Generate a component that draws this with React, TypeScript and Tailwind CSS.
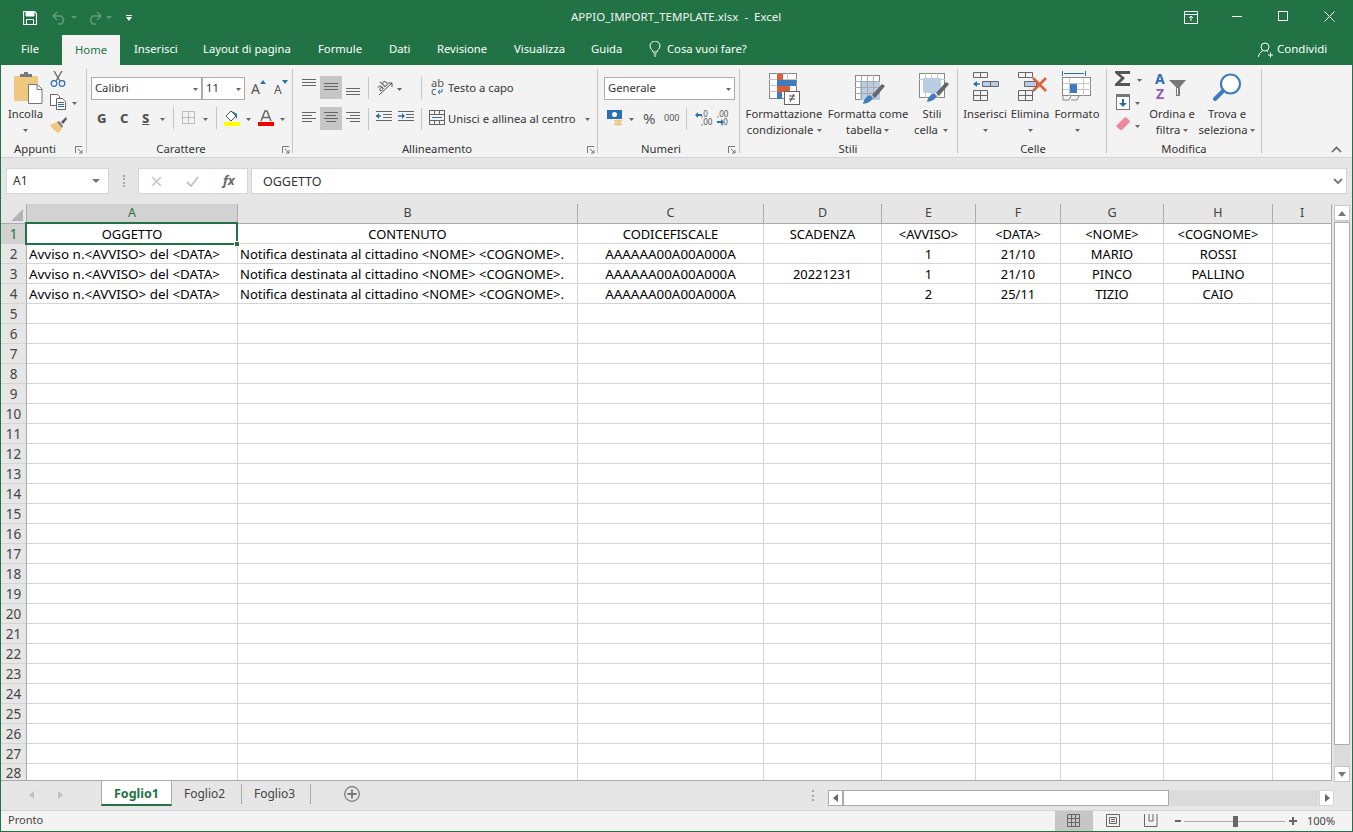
import React from 'react';

const ui = "font-['Open_Sans','Noto_Sans',sans-serif]";
const cellFont = "font-['Lato','Liberation_Sans',sans-serif]";

const columns = ['A', 'B', 'C', 'D', 'E', 'F', 'G', 'H', 'I'];
const gridCols = 'grid grid-cols-[26px_211px_340px_186px_118px_94px_85px_103px_109px_59px]';

const avviso = 'Avviso n.<AVVISO> del <DATA>';
const notifica = 'Notifica destinata al cittadino <NOME> <COGNOME>.';
const cf = 'AAAAAA00A00A000A';

const data: string[][] = [
  ['OGGETTO', 'CONTENUTO', 'CODICEFISCALE', 'SCADENZA', '<AVVISO>', '<DATA>', '<NOME>', '<COGNOME>', ''],
  [avviso, notifica, cf, '', '1', '21/10', 'MARIO', 'ROSSI', ''],
  [avviso, notifica, cf, '20221231', '1', '21/10', 'PINCO', 'PALLINO', ''],
  [avviso, notifica, cf, '', '2', '25/11', 'TIZIO', 'CAIO', ''],
];

const rows = Array.from({ length: 28 }, (_, i) => i + 1);

const Caret = ({ className }: { className: string }) => (
  <svg className={'absolute ml-px mt-px ' + className} width="5" height="3" viewBox="0 0 5 3">
    <path d="M0 0h5L2.500 3z" fill="#666" />
  </svg>
);

const Lbl = ({ className, children }: { className: string; children: React.ReactNode }) => (
  <span className={'absolute whitespace-nowrap text-[11.25px] leading-[16px] text-[#333] ' + className}>{children}</span>
);

const Launcher = ({ className }: { className: string }) => (
  <svg className={'absolute ' + className} width="8" height="8" viewBox="0 0 8 8" fill="none" stroke="#777">
    <path d="M.5 7V.5H7" />
    <path d="M3 3l4 4M7 4v3H4" />
  </svg>
);

const Sep = ({ className }: { className: string }) => <div className={'absolute w-px bg-[#c6c6c6] ' + className} />;

const GroupEnd = () => <div className="absolute right-0 top-[4px] h-[84px] w-px bg-[#c6c6c6]" />;

const AlignLines = ({ className, d }: { className: string; d: string }) => (
  <svg className={'absolute ' + className} width="15" height="12" viewBox="0 0 15 12" fill="none" stroke="#666">
    <path d={d} />
  </svg>
);

const Appunti = () => (
  <div className="relative h-full w-[87px]">
    <svg className="absolute left-[14px] top-[7px]" width="29" height="32" viewBox="0 0 29 32">
      <rect x="0" y="4" width="24" height="25" rx="1.500" fill="#eec87e" />
      <path d="M6 4V2h4V0h4v2h4v3H6z" fill="#7a7a7a" />
      <path d="M14.500 12.500h9l4.500 4.500v14.500h-13.500z" fill="#fff" stroke="#777" />
      <path d="M23 13v4.500h5" fill="none" stroke="#777" />
    </svg>
    <Lbl className="left-0 top-[41px] w-[51px] text-center">Incolla</Lbl>
    <Caret className="left-[22px] top-[63px]" />
    <svg className="absolute left-[50px] top-[6px]" width="16" height="16" viewBox="0 0 16 16" fill="none">
      <path d="M4 0l6 10M12 0L6 10" stroke="#6a6a6a" strokeWidth="1.400" />
      <circle cx="4" cy="12.500" r="2.800" stroke="#2b6fb3" strokeWidth="1.200" />
      <circle cx="12" cy="12.500" r="2.800" stroke="#2b6fb3" strokeWidth="1.200" />
    </svg>
    <svg className="absolute left-[50px] top-[29px]" width="16" height="16" viewBox="0 0 16 16" fill="#fff" stroke="#666">
      <path d="M.5.500h7l2 2v9h-9z" />
      <path d="M6.500 4.500h6l3 3v8h-9z" />
      <path d="M8 8.500h6M8 10.500h6M8 12.500h6" stroke="#2b6fb3" />
    </svg>
    <Caret className="left-[71px] top-[36px]" />
    <svg className="absolute left-[50px] top-[52px]" width="17" height="16" viewBox="0 0 17 16">
      <path d="M0 8l7-3 5 6-3 5c-3-1-7-4-9-8z" fill="#eec87e" />
      <path d="M7 5l2-1 4 5-1 2z" fill="#7a7a7a" />
      <path d="M11 5l5-5 1 2-4 5z" fill="#555" />
    </svg>
    <Lbl className="left-0 top-[76px] w-[70px] text-center">Appunti</Lbl>
    <Launcher className="left-[75px] top-[81px]" />
    <GroupEnd />
  </div>
);

const Carattere = () => (
  <div className="relative h-full w-[206px]">
    <div className="absolute left-[4px] top-[12px] h-[23px] w-[111px] border border-[#ababab] bg-white">
      <span className={'absolute left-[3px] top-[2px] text-[11.25px] leading-[16px] text-[#333] ' + ui}>Calibri</span>
      <Caret className="right-[3px] top-[9px]" />
    </div>
    <div className="absolute left-[115px] top-[12px] h-[23px] w-[43px] border border-[#ababab] bg-white">
      <span className={'absolute left-[3px] top-[2px] text-[11.25px] leading-[16px] text-[#333] ' + ui}>11</span>
      <Caret className="right-[3px] top-[9px]" />
    </div>
    <span className="absolute left-[164px] top-[15px] text-[14px] leading-[18px] text-[#555]">A</span>
    <svg className="absolute left-[173px] top-[15px]" width="6" height="4" viewBox="0 0 6 4">
      <path d="M0 4h6L3 0z" fill="#2b6fb3" />
    </svg>
    <span className="absolute left-[187px] top-[17px] text-[12px] leading-[16px] text-[#555]">A</span>
    <svg className="absolute left-[195px] top-[15px]" width="6" height="4" viewBox="0 0 6 4">
      <path d="M0 0h6L3 4z" fill="#2b6fb3" />
    </svg>
    <span className="absolute left-[10px] top-[45px] text-[13px] font-extrabold leading-[16px] text-[#555]">G</span>
    <span className="absolute left-[33px] top-[45px] text-[13px] font-extrabold leading-[16px] text-[#555]">C</span>
    <span className="absolute left-[55px] top-[45px] text-[13px] font-extrabold leading-[16px] text-[#555] underline">S</span>
    <Caret className="left-[72px] top-[52px]" />
    <Sep className="left-[86px] top-[42px] h-[22px]" />
    <svg className="absolute left-[95px] top-[46px]" width="13" height="13" viewBox="0 0 13 13" fill="none" stroke="#888" strokeDasharray="1 1">
      <path d="M.5.500h12v12H.5zM6.500.500v12M.5 6.500h12" />
    </svg>
    <Caret className="left-[115px] top-[52px]" />
    <Sep className="left-[129px] top-[42px] h-[22px]" />
    <svg className="absolute left-[137px] top-[45px]" width="17" height="17" viewBox="0 0 17 17">
      <path d="M2 6l5-5 5 5-5 5z" fill="#fff" stroke="#555" />
      <path d="M8 1l5 3v5l-2-3z" fill="#2b6fb3" />
      <rect x="0" y="12" width="16" height="4" fill="#ffff00" />
    </svg>
    <Caret className="left-[158px] top-[52px]" />
    <svg className="absolute left-[171px] top-[45px]" width="16" height="17" viewBox="0 0 16 17">
      <path d="M3 11L7 1h2l4 10M5 7.500h6" fill="none" stroke="#666" strokeWidth="1.500" />
      <rect x="0" y="12" width="16" height="4" fill="#f00000" />
    </svg>
    <Caret className="left-[192px] top-[52px]" />
    <Lbl className="left-[44px] top-[76px] w-[100px] text-center">Carattere</Lbl>
    <Launcher className="left-[195px] top-[81px]" />
    <GroupEnd />
  </div>
);

const Allineamento = () => (
  <div className="relative h-full w-[305px]">
    <div className="absolute left-[27px] top-[11px] h-[23px] w-[22px] bg-[#c6c6c6]" />
    <div className="absolute left-[27px] top-[42px] h-[23px] w-[22px] bg-[#c6c6c6]" />
    <AlignLines className="left-[9px] top-[13px]" d="M0 1.500h14M0 4.500h14M0 7.500h14" />
    <AlignLines className="left-[31px] top-[17px]" d="M0 1.500h14M0 4.500h14M0 7.500h14" />
    <AlignLines className="left-[53px] top-[21px]" d="M0 2.500h14M0 5.500h14M0 8.500h14" />
    <AlignLines className="left-[9px] top-[47px]" d="M0 .5h14M0 3.500h10M0 6.500h14M0 9.500h10" />
    <AlignLines className="left-[31px] top-[47px]" d="M0 .5h14M2 3.500h10M0 6.500h14M2 9.500h10" />
    <AlignLines className="left-[53px] top-[47px]" d="M0 .5h14M4 3.500h10M0 6.500h14M4 9.500h10" />
    <Sep className="left-[75px] top-[12px] h-[22px]" />
    <Sep className="left-[75px] top-[43px] h-[22px]" />
    <span className="absolute left-[83px] top-[15px] -rotate-45 text-[10px] leading-[10px] text-[#555]">ab</span>
    <svg className="absolute left-[85px] top-[17px]" width="15" height="14" viewBox="0 0 15 14" fill="none" stroke="#555">
      <path d="M1 13L14 1M14 1h-4M14 1v4" />
    </svg>
    <Caret className="left-[103px] top-[22px]" />
    <svg className="absolute left-[83px] top-[46px]" width="16" height="12" viewBox="0 0 16 12" fill="none" stroke="#666">
      <path d="M0 .5h16M7 3.500h9M7 6.500h9M0 9.500h16" />
      <path d="M0 5h5" stroke="#2b6fb3" strokeWidth="1.500" />
      <path d="M3 2L0 5l3 3z" fill="#2b6fb3" stroke="none" />
    </svg>
    <svg className="absolute left-[105px] top-[46px]" width="16" height="12" viewBox="0 0 16 12" fill="none" stroke="#666">
      <path d="M0 .5h16M8 3.500h8M8 6.500h8M0 9.500h16" />
      <path d="M0 5h5" stroke="#2b6fb3" strokeWidth="1.500" />
      <path d="M4 2l3 3-3 3z" fill="#2b6fb3" stroke="none" />
    </svg>
    <Sep className="left-[128px] top-[12px] h-[22px]" />
    <Sep className="left-[128px] top-[43px] h-[22px]" />
    <span className={'absolute left-[138px] top-[14px] w-[13px] text-[11px] leading-[8px] text-[#555] ' + ui}>ab<br />c</span>
    <svg className="absolute left-[144px] top-[24px]" width="6" height="6" viewBox="0 0 6 6" fill="none" stroke="#2b6fb3">
      <path d="M5 0v3H1M3 1L1 3l2 2" />
    </svg>
    <Lbl className={'left-[155px] top-[15px] ' + ui}>Testo a capo</Lbl>
    <svg className="absolute left-[136px] top-[45px]" width="16" height="15" viewBox="0 0 16 15" fill="none" stroke="#666">
      <rect x=".5" y=".5" width="15" height="14" />
      <path d="M.5 4.500h15M.5 10.500h15M5.500.5v4M10.500.5v4M5.500 10.500v4M10.500 10.500v4" />
      <path d="M3 7.500h10" stroke="#2b6fb3" />
    </svg>
    <Lbl className={'left-[155px] top-[46px] ' + ui}>Unisci e allinea al centro</Lbl>
    <Caret className="left-[291px] top-[52px]" />
    <Lbl className="left-[94px] top-[76px] w-[100px] text-center">Allineamento</Lbl>
    <Launcher className="left-[294px] top-[81px]" />
    <GroupEnd />
  </div>
);

const Numeri = () => (
  <div className="relative h-full w-[142px]">
    <div className="absolute left-[6px] top-[12px] h-[23px] w-[131px] border border-[#ababab] bg-white">
      <span className={'absolute left-[3px] top-[2px] text-[11.25px] leading-[16px] text-[#333] ' + ui}>Generale</span>
      <Caret className="right-[3px] top-[9px]" />
    </div>
    <svg className="absolute left-[9px] top-[45px]" width="16" height="17" viewBox="0 0 16 17">
      <rect x="0" y="0" width="15" height="9" fill="#2b6fb3" />
      <circle cx="7.500" cy="4.500" r="2.500" fill="#fff" />
      <ellipse cx="11" cy="11" rx="4" ry="1.500" fill="#eec87e" />
      <ellipse cx="11" cy="14" rx="4" ry="1.500" fill="#eec87e" />
    </svg>
    <Caret className="left-[30px] top-[52px]" />
    <span className={'absolute left-[45px] top-[43px] text-[15px] leading-[20px] text-[#555] ' + ui}>%</span>
    <span className={'absolute left-[66px] top-[46px] text-[9px] leading-[14px] text-[#555] ' + ui}>000</span>
    <Sep className="left-[88px] top-[43px] h-[22px]" />
    <span className={'absolute left-[103px] top-[45px] text-[8px] leading-[8px] text-[#555] ' + ui}>,0<br />,00</span>
    <svg className="absolute left-[97px] top-[47px]" width="7" height="6" viewBox="0 0 7 6">
      <path d="M0 3l3-3v2h4v2H3v2z" fill="#2b6fb3" />
    </svg>
    <span className={'absolute left-[119px] top-[45px] text-[8px] leading-[8px] text-[#555] ' + ui}>,00<br />&nbsp;&nbsp;,0</span>
    <svg className="absolute left-[119px] top-[54px]" width="7" height="6" viewBox="0 0 7 6">
      <path d="M7 3L4 0v2H0v2h4v2z" fill="#2b6fb3" />
    </svg>
    <Lbl className="left-[33px] top-[76px] w-[60px] text-center">Numeri</Lbl>
    <Launcher className="left-[130px] top-[81px]" />
    <GroupEnd />
  </div>
);

const Stili = () => (
  <div className="relative h-full w-[218px]">
    <svg className="absolute left-[29px] top-[8px]" width="32" height="32" viewBox="0 0 32 32">
      <rect x=".5" y=".5" width="27" height="25" fill="#fff" stroke="#888" />
      <path d="M8.500 0v26M18.500 0v26M0 6.500h28M0 12.500h28M0 18.500h28" stroke="#c6c6c6" />
      <rect x="8" y="1" width="6" height="6" fill="#d9603b" />
      <rect x="8" y="7" width="19" height="6" fill="#3f7cbf" />
      <rect x="8" y="13" width="13" height="6" fill="#d9603b" />
      <rect x="8" y="19" width="5" height="7" fill="#3f7cbf" />
      <rect x="15.500" y="18.500" width="15" height="13" fill="#fff" stroke="#666" />
      <path d="M20 23h6M20 26h6M25 21l-4 8" stroke="#444" fill="none" />
    </svg>
    <Lbl className={'left-[0px] top-[41px] w-[88px] text-center ' + ui}>Formattazione</Lbl>
    <Lbl className={'left-[2px] top-[57px] w-[76px] text-center ' + ui}>condizionale</Lbl>
    <Caret className="left-[76px] top-[63px]" />
    <svg className="absolute left-[115px] top-[10px]" width="30" height="30" viewBox="0 0 30 30">
      <rect x=".5" y=".5" width="24" height="24" fill="#fff" stroke="#888" />
      <rect x="5" y="7" width="20" height="18" fill="#b9cde5" />
      <path d="M6.500 0v25M12.500 0v25M18.500 0v25M0 6.500h25M0 12.500h25M0 18.500h25" stroke="#aaa" />
      <path d="M8 29c1-5 3-7 7-9l3 3c-2 3-4 5-10 6z" fill="#3f7cbf" />
      <path d="M17 20L27 9l3 2-10 12z" fill="#666" />
    </svg>
    <Lbl className={'left-[85px] top-[41px] w-[86px] text-center ' + ui}>Formatta come</Lbl>
    <Lbl className={'left-[104px] top-[57px] w-[40px] text-center ' + ui}>tabella</Lbl>
    <Caret className="left-[143px] top-[63px]" />
    <svg className="absolute left-[179px] top-[8px]" width="30" height="30" viewBox="0 0 30 30">
      <rect x=".5" y=".5" width="25" height="24" fill="#fff" stroke="#888" />
      <path d="M6.500 0v25M12.500 0v25M18.500 0v25M0 6.500h26" stroke="#c6c6c6" />
      <rect x="4" y="5" width="18" height="15" fill="#b9cde5" />
      <path d="M8 29c1-5 3-7 7-9l3 3c-2 3-4 5-10 6z" fill="#3f7cbf" />
      <path d="M17 20L27 9l3 2-10 12z" fill="#666" />
    </svg>
    <Lbl className={'left-[172px] top-[41px] w-[40px] text-center ' + ui}>Stili</Lbl>
    <Lbl className={'left-[166px] top-[57px] w-[40px] text-center ' + ui}>cella</Lbl>
    <Caret className="left-[202px] top-[63px]" />
    <Lbl className="left-[78px] top-[76px] w-[60px] text-center">Stili</Lbl>
    <GroupEnd />
  </div>
);

const Celle = () => (
  <div className="relative h-full w-[149px]">
    <svg className="absolute left-[14px] top-[7px]" width="28" height="29" viewBox="0 0 28 29" fill="none" stroke="#666">
      <path d="M1.500.5h14v5h-14zM8.500.5v5" />
      <path d="M10.500 9.500h16v5h-16zM18.500 9.500v5" fill="#b9cde5" />
      <path d="M8 12H2" stroke="#2b6fb3" strokeWidth="1.500" />
      <path d="M5 9l-4 3 4 3z" fill="#2b6fb3" stroke="none" />
      <path d="M1.500 18.500h14v10h-14zM1.500 23.500h14M8.500 18.500v10" />
    </svg>
    <Lbl className={'left-[0px] top-[41px] w-[54px] text-center ' + ui}>Inserisci</Lbl>
    <Caret className="left-[24px] top-[63px]" />
    <svg className="absolute left-[59px] top-[7px]" width="31" height="29" viewBox="0 0 31 29" fill="none" stroke="#666">
      <path d="M1.500.5h14v5h-14zM8.500.5v5" />
      <path d="M7.500 9.500h12v5h-12z" fill="#b9cde5" />
      <path d="M1.500 18.500h14v10h-14zM1.500 23.500h14M8.500 18.500v10" />
      <path d="M16 6l13 13M29 6L16 19" stroke="#e0603b" strokeWidth="2.500" />
    </svg>
    <Lbl className={'left-[44px] top-[41px] w-[56px] text-center ' + ui}>Elimina</Lbl>
    <Caret className="left-[69px] top-[63px]" />
    <svg className="absolute left-[104px] top-[6px]" width="30" height="31" viewBox="0 0 30 31" fill="none">
      <path d="M.5 0v5M23.500 0v5M2 2.500h20" stroke="#2b6fb3" />
      <rect x=".5" y="6.500" width="28" height="18" fill="#fff" stroke="#888" />
      <path d="M7.500 7v18M21.500 7v18M1 12.500h28M1 18.500h28" stroke="#c6c6c6" />
      <rect x="8" y="13" width="7" height="9" fill="#3f7cbf" />
      <path d="M1 25v4h6l2-4M9 29l6 0 2-4" stroke="#888" />
    </svg>
    <Lbl className={'left-[89px] top-[41px] w-[60px] text-center ' + ui}>Formato</Lbl>
    <Caret className="left-[116px] top-[63px]" />
    <Lbl className="left-[45px] top-[76px] w-[60px] text-center">Celle</Lbl>
    <GroupEnd />
  </div>
);

const Modifica = () => (
  <div className="relative h-full w-[155px]">
    <svg className="absolute left-[8px] top-[6px]" width="16" height="15" viewBox="0 0 16 15">
      <path d="M0 0h15v3H5l5 4-5 5h10v3H0v-2l6-6-6-5z" fill="#555" />
    </svg>
    <Caret className="left-[29px] top-[13px]" />
    <svg className="absolute left-[9px] top-[29px]" width="14" height="16" viewBox="0 0 14 16">
      <rect x=".5" y=".5" width="13" height="15" fill="#fff" stroke="#777" />
      <rect x="0" y="0" width="14" height="3" fill="#777" />
      <path d="M7 5v5" stroke="#2b6fb3" strokeWidth="2" />
      <path d="M3 9h8l-4 4z" fill="#2b6fb3" />
    </svg>
    <Caret className="left-[27px] top-[36px]" />
    <svg className="absolute left-[9px] top-[52px]" width="14" height="14" viewBox="0 0 14 14">
      <path d="M0 9l8-8c1-1 2-1 3 0l2 2c1 1 1 2 0 3l-7 7H4z" fill="#ec8a9c" />
    </svg>
    <Caret className="left-[27px] top-[59px]" />
    <span className="absolute left-[48px] top-[6px] text-[14px] font-bold leading-[16px] text-[#2b6fb3]">A</span>
    <span className="absolute left-[49px] top-[21px] text-[14px] font-bold leading-[16px] text-[#8f5fb0]">Z</span>
    <svg className="absolute left-[62px] top-[15px]" width="17" height="16" viewBox="0 0 17 16">
      <path d="M0 0h17l-6 7v9H7V7z" fill="#777" />
      <path d="M8.500 8v7" stroke="#fff" />
    </svg>
    <Lbl className={'left-[35px] top-[41px] w-[60px] text-center ' + ui}>Ordina e</Lbl>
    <Lbl className={'left-[41px] top-[57px] w-[40px] text-center ' + ui}>filtra</Lbl>
    <Caret className="left-[75px] top-[63px]" />
    <svg className="absolute left-[106px] top-[8px]" width="29" height="28" viewBox="0 0 29 28" fill="none">
      <circle cx="17.500" cy="11" r="9.500" stroke="#3f7cbf" strokeWidth="2.200" fill="#fff" />
      <path d="M10 18L2 26" stroke="#3f7cbf" strokeWidth="4" strokeLinecap="round" />
    </svg>
    <Lbl className={'left-[90px] top-[41px] w-[60px] text-center ' + ui}>Trova e</Lbl>
    <Lbl className={'left-[86px] top-[57px] w-[60px] text-center ' + ui}>seleziona</Lbl>
    <Caret className="left-[142px] top-[63px]" />
    <Lbl className="left-[47px] top-[76px] w-[60px] text-center">Modifica</Lbl>
    <GroupEnd />
  </div>
);

const Cell = ({ col, row, text }: { col: number; row: number; text: string }) => {
  const left = col < 2 && row > 0;
  let size = 'text-[12.9px]';
  if (row > 0 && (col === 0 || col === 2)) size = 'text-[13.4px]';
  if (row > 0 && col === 1) size = 'text-[13px]';
  return (
    <div
      className={
        'overflow-hidden whitespace-nowrap border-b border-r border-[#d4d4d4] pt-[2px] leading-[17px] text-[#000] ' +
        size + ' ' +
        (left ? 'pl-[2px]' : 'text-center')
      }
    >
      {text}
    </div>
  );
};

export default function App() {
  return (
    <div className={'relative flex h-[832px] w-[1353px] flex-col overflow-hidden border-x border-b border-[#217346] bg-[#e6e6e6] ' + ui}>
      {/* title bar */}
      <div className="relative ml-[-1px] mr-[-1px] h-[65px] shrink-0 bg-[#217346] text-white">
        <svg className="absolute left-[23px] top-[11px]" width="14" height="14" viewBox="0 0 14 14" fill="none" stroke="#fff">
          <path d="M.5.500h11l2 2v11H.5z" strokeWidth="1.200" />
          <path d="M3 1v4h8V1" fill="#fff" />
          <path d="M3.500 13V8.500h7V13" />
        </svg>
        <svg className="absolute left-[52px] top-[11px]" width="15" height="14" viewBox="0 0 15 14" fill="none" stroke="#5f9c7d" strokeWidth="1.500">
          <path d="M5 1L1 5l4 4M1 5h8a4.500 4.500 0 0 1 0 8H6" />
        </svg>
        <svg className="absolute left-[71px] top-[16px]" width="6" height="3" viewBox="0 0 6 3">
          <path d="M0 0h6L3 3z" fill="#5f9c7d" />
        </svg>
        <svg className="absolute left-[87px] top-[11px]" width="15" height="14" viewBox="0 0 15 14" fill="none" stroke="#5f9c7d" strokeWidth="1.500">
          <path d="M10 1l4 4-4 4M14 5H6a4.500 4.500 0 0 0 0 8h3" />
        </svg>
        <svg className="absolute left-[106px] top-[16px]" width="6" height="3" viewBox="0 0 6 3">
          <path d="M0 0h6L3 3z" fill="#5f9c7d" />
        </svg>
        <svg className="absolute left-[126px] top-[15px]" width="6" height="6" viewBox="0 0 6 6" fill="#fff">
          <path d="M0 0h6v1H0zM0 2h6L3 6z" />
        </svg>
        <span className="absolute left-[571px] top-[9px] whitespace-pre text-[11.5px] leading-[16px] text-[#f2f2f2]">APPIO_IMPORT_TEMPLATE.xlsx  -  Excel</span>
        <svg className="absolute left-[1184px] top-[11px]" width="14" height="13" viewBox="0 0 14 13" fill="none" stroke="#fff">
          <path d="M.5.500h13v12H.5zM.5 3.500h13M7 10V5.500M5 7l2-2 2 2" />
        </svg>
        <div className="absolute left-[1232px] top-[16px] h-px w-[10px] bg-white" />
        <div className="absolute left-[1278px] top-[11px] h-[10px] w-[10px] border border-white" />
        <svg className="absolute left-[1324px] top-[11px]" width="11" height="11" viewBox="0 0 11 11" stroke="#fff">
          <path d="M.5.500l10 10M10.500.5l-10 10" />
        </svg>

        <span className="absolute left-[21px] top-[41px] text-[11.25px] leading-[16px]">File</span>
        <div className="absolute left-[62px] top-[35px] flex h-[30px] w-[58px] items-center justify-center bg-[#f3f3f3] text-[11.25px] text-[#217346]">Home</div>
        <span className="absolute left-[134px] top-[41px] text-[11.25px] leading-[16px]">Inserisci</span>
        <span className="absolute left-[203px] top-[41px] text-[11.25px] leading-[16px]">Layout di pagina</span>
        <span className="absolute left-[318px] top-[41px] text-[11.25px] leading-[16px]">Formule</span>
        <span className="absolute left-[389px] top-[41px] text-[11.25px] leading-[16px]">Dati</span>
        <span className="absolute left-[437px] top-[41px] text-[11.25px] leading-[16px]">Revisione</span>
        <span className="absolute left-[514px] top-[41px] text-[11.25px] leading-[16px]">Visualizza</span>
        <span className="absolute left-[591px] top-[41px] text-[11.25px] leading-[16px]">Guida</span>
        <svg className="absolute left-[649px] top-[41px]" width="12" height="16" viewBox="0 0 12 16" fill="none" stroke="#fff">
          <path d="M4 11c0-2-3-3-3-6a5 5 0 0 1 10 0c0 3-3 4-3 6zM4.500 13h3M5 15h2" />
        </svg>
        <span className="absolute left-[667px] top-[41px] text-[11.25px] leading-[16px]">Cosa vuoi fare?</span>
        <svg className="absolute left-[1258px] top-[42px]" width="15" height="16" viewBox="0 0 15 16" fill="none" stroke="#fff">
          <circle cx="7" cy="5" r="4" />
          <path d="M.5 15c0-3 2-5 4-6M9 9l1 1M10 13h5M12.500 10.500v5" />
        </svg>
        <span className="absolute left-[1277px] top-[41px] text-[11.5px] leading-[16px]">Condividi</span>
      </div>

      {/* ribbon */}
      <div className="relative ml-[-1px] flex h-[93px] shrink-0 border-b border-[#d4d4d4] bg-[#f3f3f3]">
        <Appunti />
        <Carattere />
        <Allineamento />
        <Numeri />
        <Stili />
        <Celle />
        <Modifica />
        <svg className="absolute left-[1331px] top-[81px]" width="11" height="7" viewBox="0 0 11 7" fill="none" stroke="#666" strokeWidth="1.600">
          <path d="M1 6l4.500-4.500L10 6" />
        </svg>
        <div className="absolute left-0 top-0 h-full w-px bg-[#217346]" />
      </div>

      {/* formula bar */}
      <div className="relative h-[46px] shrink-0">
        <div className="absolute left-[5px] top-[10px] h-[26px] w-[103px] border border-[#d4d4d4] bg-white">
          <span className={'absolute left-[6px] top-[4px] text-[12px] leading-[16px] text-[#333] ' + ui}>A1</span>
          <svg className="absolute right-[8px] top-[10px]" width="8" height="4" viewBox="0 0 8 4">
            <path d="M0 0h8L4 4z" fill="#777" />
          </svg>
        </div>
        <div className="absolute left-[122px] top-[17px] h-[12px] w-[2px] border-l-2 border-dotted border-[#aaa]" />
        <div className="absolute left-[137px] top-[10px] h-[26px] w-[110px] border border-[#d4d4d4] bg-white">
          <svg className="absolute left-[12px] top-[7px]" width="11" height="11" viewBox="0 0 11 11" stroke="#c6c6c6" strokeWidth="1.500">
            <path d="M1 1l9 9M10 1l-9 9" />
          </svg>
          <svg className="absolute left-[47px] top-[7px]" width="13" height="11" viewBox="0 0 13 11" fill="none" stroke="#c6c6c6" strokeWidth="2">
            <path d="M1 6l4 4 7-9" />
          </svg>
          <span className="absolute left-[84px] top-[3px] font-['Liberation_Serif',serif] text-[13px] font-bold italic leading-[16px] text-[#666]">fx</span>
        </div>
        <div className="absolute left-[250px] top-[10px] h-[26px] w-[1096px] border border-[#d4d4d4] bg-white">
          <span className={'absolute left-[11px] top-[5px] text-[12.5px] leading-[16px] text-[#333] ' + ui}>OGGETTO</span>
          <svg className="absolute right-[3px] top-[9px]" width="10" height="7" viewBox="0 0 10 7" fill="none" stroke="#777" strokeWidth="1.800">
            <path d="M1 1l4 4 4-4" />
          </svg>
        </div>
      </div>

      {/* sheet */}
      <div className="relative min-h-0 flex-1">
        <div className={gridCols + ' absolute left-0 top-0 h-[20px] w-[1331px] border-b border-[#ababab] text-[13px]'}>
          <div className="relative border-r border-[#ababab] bg-[#e6e6e6]">
            <svg className="absolute bottom-[2px] right-[3px]" width="12" height="12" viewBox="0 0 12 12">
              <path d="M12 0v12H0z" fill="#b4b4b4" />
            </svg>
          </div>
          {columns.map((c, i) => (
            <div
              key={c}
              className={
                'flex items-center justify-center border-r border-[#ababab] text-[12.5px] ' +
                cellFont + ' ' +
                (i === 0 ? 'bg-[#d2d2d2] text-[#217346]' : 'bg-[#e6e6e6] text-[#444]')
              }
            >
              {c}
            </div>
          ))}
        </div>
        <div className={gridCols + ' absolute left-0 top-[20px] h-[557px] w-[1331px] auto-rows-[20px] overflow-hidden border-b border-r border-[#ababab] bg-white ' + cellFont}>
          {rows.map((r) => (
            <React.Fragment key={r}>
              <div
                className={
                  'flex items-center justify-center border-b border-r border-[#ababab] border-b-[#d4d4d4] pt-[1px] text-[13.5px] leading-[16px] ' +
                  (r === 28 ? 'h-[17px] ' : '') +
                  (r === 1 ? 'bg-[#d2d2d2] text-[#217346]' : 'bg-[#e6e6e6] text-[#444]')
                }
              >
                {r}
              </div>
              {columns.map((c, i) => (
                <Cell key={c} col={i} row={r - 1} text={data[r - 1]?.[i] ?? ''} />
              ))}
            </React.Fragment>
          ))}
        </div>
        {/* selected cell */}
        <div className="absolute left-[24px] top-[18px] h-[23px] w-[213px] border-2 border-[#217346]" />
        <div className="absolute left-[233px] top-[37px] h-[6px] w-[6px] border border-white bg-[#217346]" />

        {/* vertical scrollbar */}
        <div className="absolute left-[1333px] top-[1px] h-[577px] w-[16px] bg-[#dbdbdb]">
          <div className="absolute left-0 top-0 h-[16px] w-[16px] border border-[#c6c6c6] bg-white">
            <svg className="absolute left-[3px] top-[5px]" width="8" height="5" viewBox="0 0 8 5">
              <path d="M0 5h8L4 0z" fill="#777" />
            </svg>
          </div>
          <div className="absolute left-0 top-[17px] h-[523px] w-[16px] border border-[#ababab] bg-white" />
          <div className="absolute bottom-0 left-0 h-[16px] w-[16px] border border-[#c6c6c6] bg-white">
            <svg className="absolute left-[3px] top-[5px]" width="8" height="5" viewBox="0 0 8 5">
              <path d="M0 0h8L4 5z" fill="#777" />
            </svg>
          </div>
        </div>
      </div>

      {/* sheet tabs */}
      <div className="relative h-[29px] shrink-0">
        <svg className="absolute left-[28px] top-[10px]" width="5" height="8" viewBox="0 0 5 8">
          <path d="M5 0v8L0 4z" fill="#c0c0c0" />
        </svg>
        <svg className="absolute left-[57px] top-[10px]" width="5" height="8" viewBox="0 0 5 8">
          <path d="M0 0v8l5-4z" fill="#c0c0c0" />
        </svg>
        <div className="absolute left-[100px] top-[0px] h-[25px] w-[71px] border-x border-[#ababab] border-b-2 border-b-[#217346] bg-white pt-px text-center text-[12.5px] font-bold leading-[24px] text-[#217346]">Foglio1</div>
        <span className="absolute left-[183px] top-[5px] text-[12px] leading-[16px] text-[#444]">Foglio2</span>
        <div className="absolute left-[240px] top-[3px] h-[20px] w-px bg-[#ababab]" />
        <span className="absolute left-[253px] top-[5px] text-[12px] leading-[16px] text-[#444]">Foglio3</span>
        <div className="absolute left-[309px] top-[3px] h-[20px] w-px bg-[#ababab]" />
        <svg className="absolute left-[343px] top-[5px]" width="16" height="16" viewBox="0 0 16 16" fill="none" stroke="#777">
          <circle cx="8" cy="8" r="7.300" strokeWidth="1.200" />
          <path d="M8 3.500v9M3.500 8h9" strokeWidth="1.800" />
        </svg>
        <div className="absolute left-[811px] top-[9px] h-[11px] w-[2px] border-l-2 border-dotted border-[#aaa]" />
        <div className="absolute left-[827px] top-[9px] h-[16px] w-[490px] bg-[#dbdbdb]">
          <div className="absolute left-0 top-0 h-[16px] w-[15px] border border-[#ababab] bg-white">
            <svg className="absolute left-[4px] top-[3px]" width="5" height="8" viewBox="0 0 5 8">
              <path d="M5 0v8L0 4z" fill="#666" />
            </svg>
          </div>
          <div className="absolute left-[15px] top-0 h-[16px] w-[326px] border border-[#ababab] bg-white" />
        </div>
        <div className="absolute left-[1318px] top-[9px] h-[16px] w-[15px] border border-[#d4d4d4] bg-white">
          <svg className="absolute left-[5px] top-[3px]" width="5" height="8" viewBox="0 0 5 8">
            <path d="M0 0v8l5-4z" fill="#666" />
          </svg>
        </div>
      </div>

      {/* status bar */}
      <div className="relative h-[21px] shrink-0 border-t border-[#d4d4d4] bg-[#f3f3f3]">
        <span className="absolute left-[7px] top-[1px] text-[11px] leading-[16px] text-[#444]">Pronto</span>
        <div className="absolute left-[1054px] top-0 h-[21px] w-[38px] bg-[#c6c6c6]" />
        <svg className="absolute left-[1066px] top-[3px]" width="13" height="13" viewBox="0 0 13 13" fill="none" stroke="#666">
          <path d="M.5.500h12v12H.5zM4.500.5v12M8.500.5v12M.5 4.500h12M.5 8.500h12" />
        </svg>
        <svg className="absolute left-[1105px] top-[3px]" width="14" height="13" viewBox="0 0 14 13" fill="none" stroke="#666">
          <path d="M.5.500h13v12H.5zM3.500 3.500h7v6h-7zM5 5.500h4M5 7.500h4" />
        </svg>
        <svg className="absolute left-[1143px] top-[3px]" width="14" height="13" viewBox="0 0 14 13" fill="none" stroke="#666">
          <path d="M.5 0v12.500h12.500V0M5 0v7h4V0" />
        </svg>
        <div className="absolute left-[1174px] top-[9px] h-[2px] w-[6px] bg-[#666]" />
        <div className="absolute left-[1183px] top-[10px] h-px w-[101px] bg-[#aaa]" />
        <div className="absolute left-[1232px] top-[5px] h-[11px] w-[5px] bg-[#666]" />
        <svg className="absolute left-[1288px] top-[6px]" width="8" height="8" viewBox="0 0 8 8" stroke="#666" strokeWidth="2">
          <path d="M4 0v8M0 4h8" />
        </svg>
        <span className="absolute left-[1306px] top-[2px] text-[11px] leading-[16px] text-[#444]">100%</span>
      </div>
    </div>
  );
}
